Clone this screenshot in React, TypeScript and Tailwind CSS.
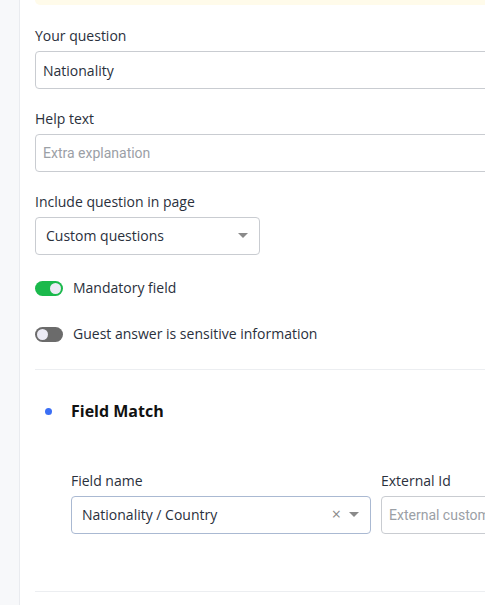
import React, { useState } from 'react';

const Toggle = ({ on, onClick }: { on: boolean; onClick: () => void }) => (
  <button
    type="button"
    onClick={onClick}
    className={`relative w-[28px] h-[15px] rounded-full shrink-0 ${on ? 'bg-[#1bb94c]' : 'bg-[#6b6b6b]'}`}
  >
    <span
      className={`absolute top-[2px] w-[11px] h-[11px] rounded-full bg-[#ecebf5] ${on ? 'left-[15px]' : 'left-[2px]'}`}
    />
  </button>
);

const Caret = () => (
  <svg width="10" height="5" viewBox="0 0 10 5" className="shrink-0">
    <path d="M0 0h10L5 5z" fill="#8a8a8a" />
  </svg>
);

const App = () => {
  const [mandatory, setMandatory] = useState(true);
  const [sensitive, setSensitive] = useState(false);

  return (
    <div
      className="flex w-[485px] h-[605px] overflow-hidden bg-white text-[14px] text-[#2a303c]"
      style={{ fontFamily: '"Open Sans", sans-serif' }}
    >
      <div className="w-[20px] shrink-0 bg-[#f7f8fa] border-r border-[#e9ebef]" />

      <div className="flex-1 pl-[15px] flex flex-col min-w-0">
        <div className="h-[5px] w-[520px] bg-[#fffbea] rounded-bl-[6px]" />

        <label className="mt-[21px] leading-[20px]">Your question</label>
        <input
          defaultValue="Nationality"
          className="mt-[5px] w-[500px] h-[38px] px-[7px] border border-[#c9ccd1] rounded-[4px] outline-none text-[14px] text-[#2a303c]"
        />

        <label className="mt-[20px] leading-[20px]">Help text</label>
        <input
          placeholder="Extra explanation"
          className="mt-[5px] w-[500px] h-[38px] px-[7px] border border-[#c9ccd1] rounded-[4px] outline-none text-[14px] placeholder:text-[#9ba0a6]"
          style={{ fontFamily: 'Roboto, sans-serif' }}
        />

        <label className="mt-[20px] leading-[20px]">Include question in page</label>
        <div className="mt-[5px] w-[225px] h-[38px] pl-[10px] pr-[11px] pb-[2px] border border-[#c9ccd1] rounded-[4px] flex items-center justify-between">
          <span>Custom questions</span>
          <Caret />
        </div>

        <div className="mt-[23px] flex items-center gap-[10px] leading-[20px]">
          <Toggle on={mandatory} onClick={() => setMandatory(!mandatory)} />
          <span>Mandatory field</span>
        </div>

        <div className="mt-[26px] flex items-center gap-[10px] leading-[20px]">
          <Toggle on={sensitive} onClick={() => setSensitive(!sensitive)} />
          <span>Guest answer is sensitive information</span>
        </div>

        <div className="mt-[25px] border-t border-[#eceef1] w-[500px]" />

        <div className="mt-[29px] flex items-center leading-[24px]">
          <span className="ml-[10px] w-[7px] h-[7px] rounded-full bg-[#3b6ff5]" />
          <span className="ml-[19px] text-[16px] font-bold text-[#111]">Field Match</span>
        </div>

        <div className="mt-[48px] pl-[36px] flex gap-[10px]">
          <div className="flex flex-col">
            <label className="leading-[20px]">Field name</label>
            <div className="mt-[5px] w-[300px] h-[38px] pl-[10px] pr-[11px] pb-[2px] border border-[#aab9d2] rounded-[4px] flex items-center">
              <span className="flex-1">Nationality / Country</span>
              <span className="text-[#8a8a8a] text-[16px] leading-none mr-[8px]">×</span>
              <Caret />
            </div>
          </div>
          <div className="flex flex-col">
            <label className="leading-[20px]">External Id</label>
            <input
              placeholder="External custom field id"
              className="mt-[5px] w-[200px] h-[38px] px-[7px] border border-[#c9ccd1] rounded-[4px] outline-none text-[14px] placeholder:text-[#9ba0a6]"
              style={{ fontFamily: 'Roboto, sans-serif' }}
            />
          </div>
        </div>

        <div className="mt-[57px] border-t border-[#eceef1] w-[500px]" />
      </div>
    </div>
  );
};

export default App;
